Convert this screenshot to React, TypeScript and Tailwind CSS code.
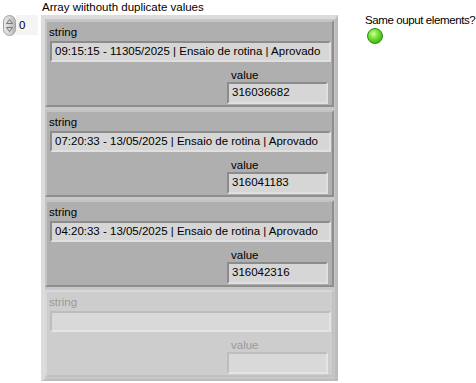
import React from 'react';

interface Row {
  text: string;
  value: string;
}

const rows: Row[] = [
  { text: '09:15:15 - 11305/2025 | Ensaio de rotina | Aprovado', value: '316036682' },
  { text: '07:20:33 - 13/05/2025 | Ensaio de rotina | Aprovado', value: '316041183' },
  { text: '04:20:33 - 13/05/2025 | Ensaio de rotina | Aprovado', value: '316042316' },
];

// caixa "afundada" estilo LabVIEW
function Sunken({ children, dim, className }: { children?: React.ReactNode; dim?: boolean; className: string }) {
  return (
    <div
      className={`${className} border-2 whitespace-nowrap overflow-hidden ${
        dim
          ? 'bg-[#d9d9d9] border-t-[#bdbdbd] border-l-[#bdbdbd] border-r-[#e4e4e4] border-b-[#e4e4e4]'
          : 'bg-[#d6d6d6] border-t-[#8c8c8c] border-l-[#8c8c8c] border-r-[#e0e0e0] border-b-[#e0e0e0]'
      } pl-[3px] flex items-center text-black`}
    >
      {children}
    </div>
  );
}

function Element({ row }: { row?: Row }) {
  const dim = !row;
  return (
    <div
      className={`h-[87px] border-2 pl-[3px] pr-[2px] ${
        dim
          ? 'bg-[#cdcdcd] border-t-[#d8d8d8] border-l-[#d8d8d8] border-r-[#c2c2c2] border-b-[#c2c2c2] text-[#9a9a9a]'
          : 'bg-[#afafaf] border-t-[#c4c4c4] border-l-[#c4c4c4] border-r-[#8e8e8e] border-b-[#8e8e8e] text-black'
      }`}
    >
      <div className="h-[19px] leading-[19px] pt-[1px] -ml-[1px]">string</div>
      <Sunken dim={dim} className="h-[21px] w-[281px]">{row?.text}</Sunken>
      <div className="flex flex-col items-end pr-[2px] mt-[6px]">
        <div className="w-[100px] h-[14px] leading-[14px] pl-[3px]">value</div>
        <Sunken dim={dim} className="h-[22px] w-[101px]">{row?.value}</Sunken>
      </div>
    </div>
  );
}

export default function App() {
  return (
    <div
      className="w-[476px] h-[383px] bg-white flex text-[11.5px] text-black overflow-hidden whitespace-nowrap"
      style={{ fontFamily: '"Liberation Sans", Tahoma, Arial, sans-serif' }}
    >
      {/* indice */}
      <div className="ml-[3px] mt-[15px] flex h-[21px]">
        <div className="w-[13px] h-[21px] rounded-full bg-gradient-to-r from-[#e8e8e8] via-[#d4d4d4] to-[#b8b8b8] border border-[#a0a0a0] flex flex-col items-center justify-center gap-[3px]">
          <svg width="7" height="5" viewBox="0 0 7 5"><path d="M0.5 4.5 L3.5 0.5 L6.5 4.5 Z" fill="none" stroke="#777" strokeWidth="1" /></svg>
          <svg width="7" height="5" viewBox="0 0 7 5"><path d="M0.5 0.5 L3.5 4.5 L6.5 0.5 Z" fill="none" stroke="#777" strokeWidth="1" /></svg>
        </div>
        <div className="w-[22px] h-[20px] bg-[#f4f4f4] pl-[3px] leading-[20px]">0</div>
      </div>

      {/* array */}
      <div className="ml-[3px] flex flex-col">
        <div className="h-[15px] leading-[13px] pt-[1px] pl-[1px]">Array wiithouth duplicate values</div>
        <div className="w-[297px] h-[366px] bg-[#c8c8c8] border-t-[4px] border-l-[4px] border-t-[#dcdcdc] border-l-[#dcdcdc] border-r-[3px] border-b-[2px] border-r-[#bcbcbc] border-b-[#bcbcbc] pt-[1px] pl-[0px] pr-[1px] flex flex-col gap-[3px]">
          {rows.map((r, i) => (
            <Element key={i} row={r} />
          ))}
          <Element />
        </div>
      </div>

      {/* led */}
      <div className="ml-[27px] mt-[13px] flex flex-col">
        <div className="leading-[14px] tracking-[-0.4px]">Same ouput elements?</div>
        <div className="ml-[2px] mt-[1px] w-[16px] h-[16px] rounded-full border border-[#2f8a10] bg-[radial-gradient(circle_at_40%_35%,#d4ff9a_0%,#7be33a_35%,#3cbc14_75%,#2a8f0c_100%)]" />
      </div>
    </div>
  );
}
